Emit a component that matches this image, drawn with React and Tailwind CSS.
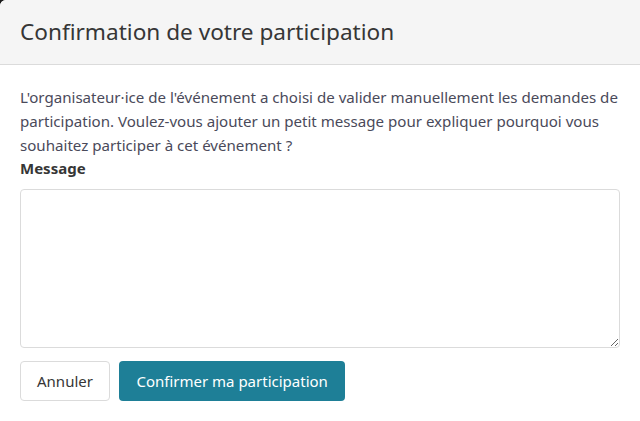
export default function App() {
  return (
    <div className="w-[640px] h-[421px] bg-[#1a1a1a] overflow-hidden" style={{ fontFamily: '"Noto Sans", "Open Sans", sans-serif' }}>
      <div className="w-full h-full bg-white rounded-tl-[6px] overflow-hidden flex flex-col">
        <header className="h-[65px] bg-[#f5f5f5] border-b border-[#dbdbdb] px-5 flex items-center shrink-0">
          <h1 className="text-[22.6px] text-[#363636] leading-none">Confirmation de votre participation</h1>
        </header>
        <section className="px-5 pt-[20px] flex flex-col">
          <p className="text-[15.1px] leading-[24px] text-[#4a4a5a]">
            L'organisateur·ice de l'événement a choisi de valider manuellement les demandes de participation. Voulez-vous ajouter un petit message pour expliquer pourquoi vous souhaitez participer à cet événement ?
          </p>
          <label className="text-[15px] font-bold text-[#363636] leading-[24px] -mt-[1px]">Message</label>
          <textarea className="mt-[9px] h-[159px] w-full border border-[#dbdbdb] rounded-[4px] resize-y" />
          <div className="flex gap-[9px] mt-[13px]">
            <button className="h-[40px] px-[16px] border border-[#dbdbdb] rounded-[4px] bg-white text-[15px] text-[#363636]">Annuler</button>
            <button className="h-[40px] px-[17.5px] rounded-[4px] bg-[#1e7f97] text-[15px] text-white">Confirmer ma participation</button>
          </div>
        </section>
      </div>
    </div>
  )
}
